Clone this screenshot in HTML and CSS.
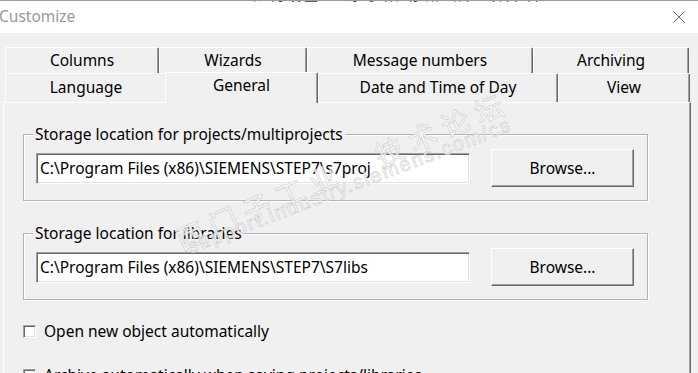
FILE: index.html
```html
<!DOCTYPE html>
<html lang="en">
<head>
    <meta charset="UTF-8">
    <meta name="viewport" content="width=device-width, initial-scale=1.0">
    <title>Customize</title>
    <link rel="stylesheet" href="styles.css">
</head>
<body>
    <!-- 后面窗口露出的一条边 -->
    <div class="backdrop"><span>如何设置 全局 参数 存储 路径 项目 库</span></div>

    <div class="titlebar">
        <span class="title">Customize</span>
        <svg class="close" width="12" height="12" viewBox="0 0 12 12">
            <path d="M0.5 0.5 L11.5 11.5 M11.5 0.5 L0.5 11.5" stroke="#6b6b6b" stroke-width="1" fill="none"/>
        </svg>
    </div>

    <div class="dialog">
        <div class="tabs">
            <div class="tab-row row-back">
                <div class="tab tab-columns">Columns</div>
                <div class="tab tab-wizards">Wizards</div>
                <div class="tab tab-message">Message numbers</div>
                <div class="tab tab-archiving">Archiving</div>
            </div>
            <div class="tab-row row-front">
                <div class="tab tab-language">Language</div>
                <div class="tab tab-general">General</div>
                <div class="tab tab-date">Date and Time of Day</div>
                <div class="tab tab-view">View</div>
            </div>
        </div>

        <div class="panel">
            <fieldset class="group">
                <legend>Storage location for projects/multiprojects</legend>
                <div class="path-row">
                    <input class="path" type="text" value="C:\Program Files (x86)\SIEMENS\STEP7\s7proj" readonly>
                    <button class="browse">Browse...</button>
                </div>
            </fieldset>

            <fieldset class="group group-libs">
                <legend>Storage location for libraries</legend>
                <div class="path-row">
                    <input class="path" type="text" value="C:\Program Files (x86)\SIEMENS\STEP7\S7libs" readonly>
                    <button class="browse">Browse...</button>
                </div>
            </fieldset>

            <label class="check"><span class="box"></span>Open new object automatically</label>
            <label class="check check-archive"><span class="box"></span>Archive automatically when saving projects/libraries</label>
        </div>
    </div>

    <!-- 论坛水印 -->
    <div class="watermark wm-cn">西门子工业　技术论坛</div>
    <div class="watermark wm-url">support.industry.siemens.com/cs</div>
</body>
</html>
```

FILE: styles.css
```css
* {
    margin: 0;
    padding: 0;
}

html,
body {
    width: 100%;
    height: 100%;
}

body {
    overflow: hidden;
    background: #f0f0f0;
    font-family: "Noto Sans", sans-serif;
    font-size: 15.5px;
    line-height: 20px;
    color: #000;
}

.backdrop {
    height: 4px;
    padding-left: 253px;
    overflow: hidden;
    background: #fff;
    border-top: 1px solid #9c9c9c;
}

.backdrop span {
    display: block;
    margin-top: -17px;
    font-family: "Noto Sans CJK SC", sans-serif;
    font-size: 14px;
    color: #3a3a3a;
    letter-spacing: 3px;
}

.titlebar {
    height: 28px;
    display: flex;
    justify-content: space-between;
    align-items: flex-start;
    padding-right: 13px;
    background: #fff;
}

.title {
    margin-top: 1px;
    margin-left: -1px;
    color: #999;
}

.close {
    margin-top: 6px;
}

/* 选项卡 */
.tabs {
    padding: 14px 0 0 5px;
}

.tab-row {
    display: flex;
}

.tab {
    box-sizing: border-box;
    text-align: center;
    background: #f0f0f0;
    border-top: 1px solid #fff;
    border-left: 1px solid #fff;
    border-right: 1px solid #696969;
    border-radius: 2px 2px 0 0;
    box-shadow: inset -1px 0 0 #a0a0a0;
    white-space: nowrap;
}

.row-back .tab {
    height: 26px;
    padding-top: 2px;
}

.row-front .tab {
    height: 29px;
    padding-top: 3px;
}

.tab-columns { width: 154px; }
.tab-wizards { width: 148px; }
.tab-message { width: 226px; }
.tab-archiving { width: 156px; }

.tab-language { width: 162px; }
.tab-date { width: 240px; }
.tab-view { width: 132px; }

.row-front .tab-general {
    position: relative;
    z-index: 1;
    width: 153px;
    height: 31px;
    margin: -1px 0 -2px -2px;
    padding-top: 2px;
}

.panel {
    box-sizing: border-box;
    width: 688px;
    height: 300px;
    margin-left: 3px;
    padding: 0 42px 0 19px;
    border-top: 1px solid #fff;
    border-left: 1px solid #fff;
    border-right: 1px solid #696969;
    box-shadow: inset -1px 0 0 #a0a0a0;
}

/* 分组框 */
.group {
    min-width: 0;
    margin-top: 21px;
    padding: 5px 12px 13px;
    border: 1px solid #b4b4b4;
    box-shadow: inset 1px 1px 0 #fff, 1px 1px 0 #fff;
}

.group-libs {
    margin-top: 22px;
}

.group legend {
    margin-left: -3px;
    padding: 0 2px;
    background: #f0f0f0;
}

.path-row {
    display: flex;
    align-items: center;
}

.path {
    box-sizing: border-box;
    width: 434px;
    height: 31px;
    padding: 0 3px 1px 3px;
    font: inherit;
    color: #000;
    background: #fff;
    border: 1px solid;
    border-color: #a0a0a0 #fff #fff #a0a0a0;
    box-shadow: inset 1px 1px 0 #696969, inset -1px -1px 0 #e3e3e3;
    outline: none;
}

.browse {
    box-sizing: border-box;
    width: 143px;
    height: 38px;
    margin-left: 21px;
    font: inherit;
    color: #000;
    background: #f0f0f0;
    border: 1px solid;
    border-color: #fff #696969 #696969 #fff;
    box-shadow: inset -1px -1px 0 #a0a0a0;
}

.browse:focus {
    outline: none;
}

/* 复选框 */
.check {
    display: flex;
    align-items: center;
    height: 20px;
    margin-top: 21px;
    white-space: nowrap;
}

.check-archive {
    margin-top: 24px;
}

.check .box {
    box-sizing: border-box;
    width: 13px;
    height: 13px;
    margin-right: 8px;
    background: #fff;
    border: 1px solid;
    border-color: #a0a0a0 #fff #fff #a0a0a0;
    box-shadow: inset 1px 1px 0 #696969, inset -1px -1px 0 #e3e3e3;
}

/* 水印 */
.watermark {
    position: absolute;
    white-space: nowrap;
    transform-origin: left center;
    color: rgba(255, 255, 255, 0.85);
    -webkit-text-stroke: 0.8px rgba(185, 185, 185, 0.6);
    pointer-events: none;
}

.wm-cn {
    left: 177px;
    top: 226px;
    font-family: "Noto Sans CJK SC", sans-serif;
    font-size: 28px;
    line-height: 28px;
    letter-spacing: 8px;
    transform: rotate(-23deg);
}

.wm-url {
    left: 188px;
    top: 237px;
    font-family: "Liberation Sans", sans-serif;
    font-size: 20px;
    line-height: 20px;
    letter-spacing: 1.8px;
    transform: rotate(-21deg);
}
```
